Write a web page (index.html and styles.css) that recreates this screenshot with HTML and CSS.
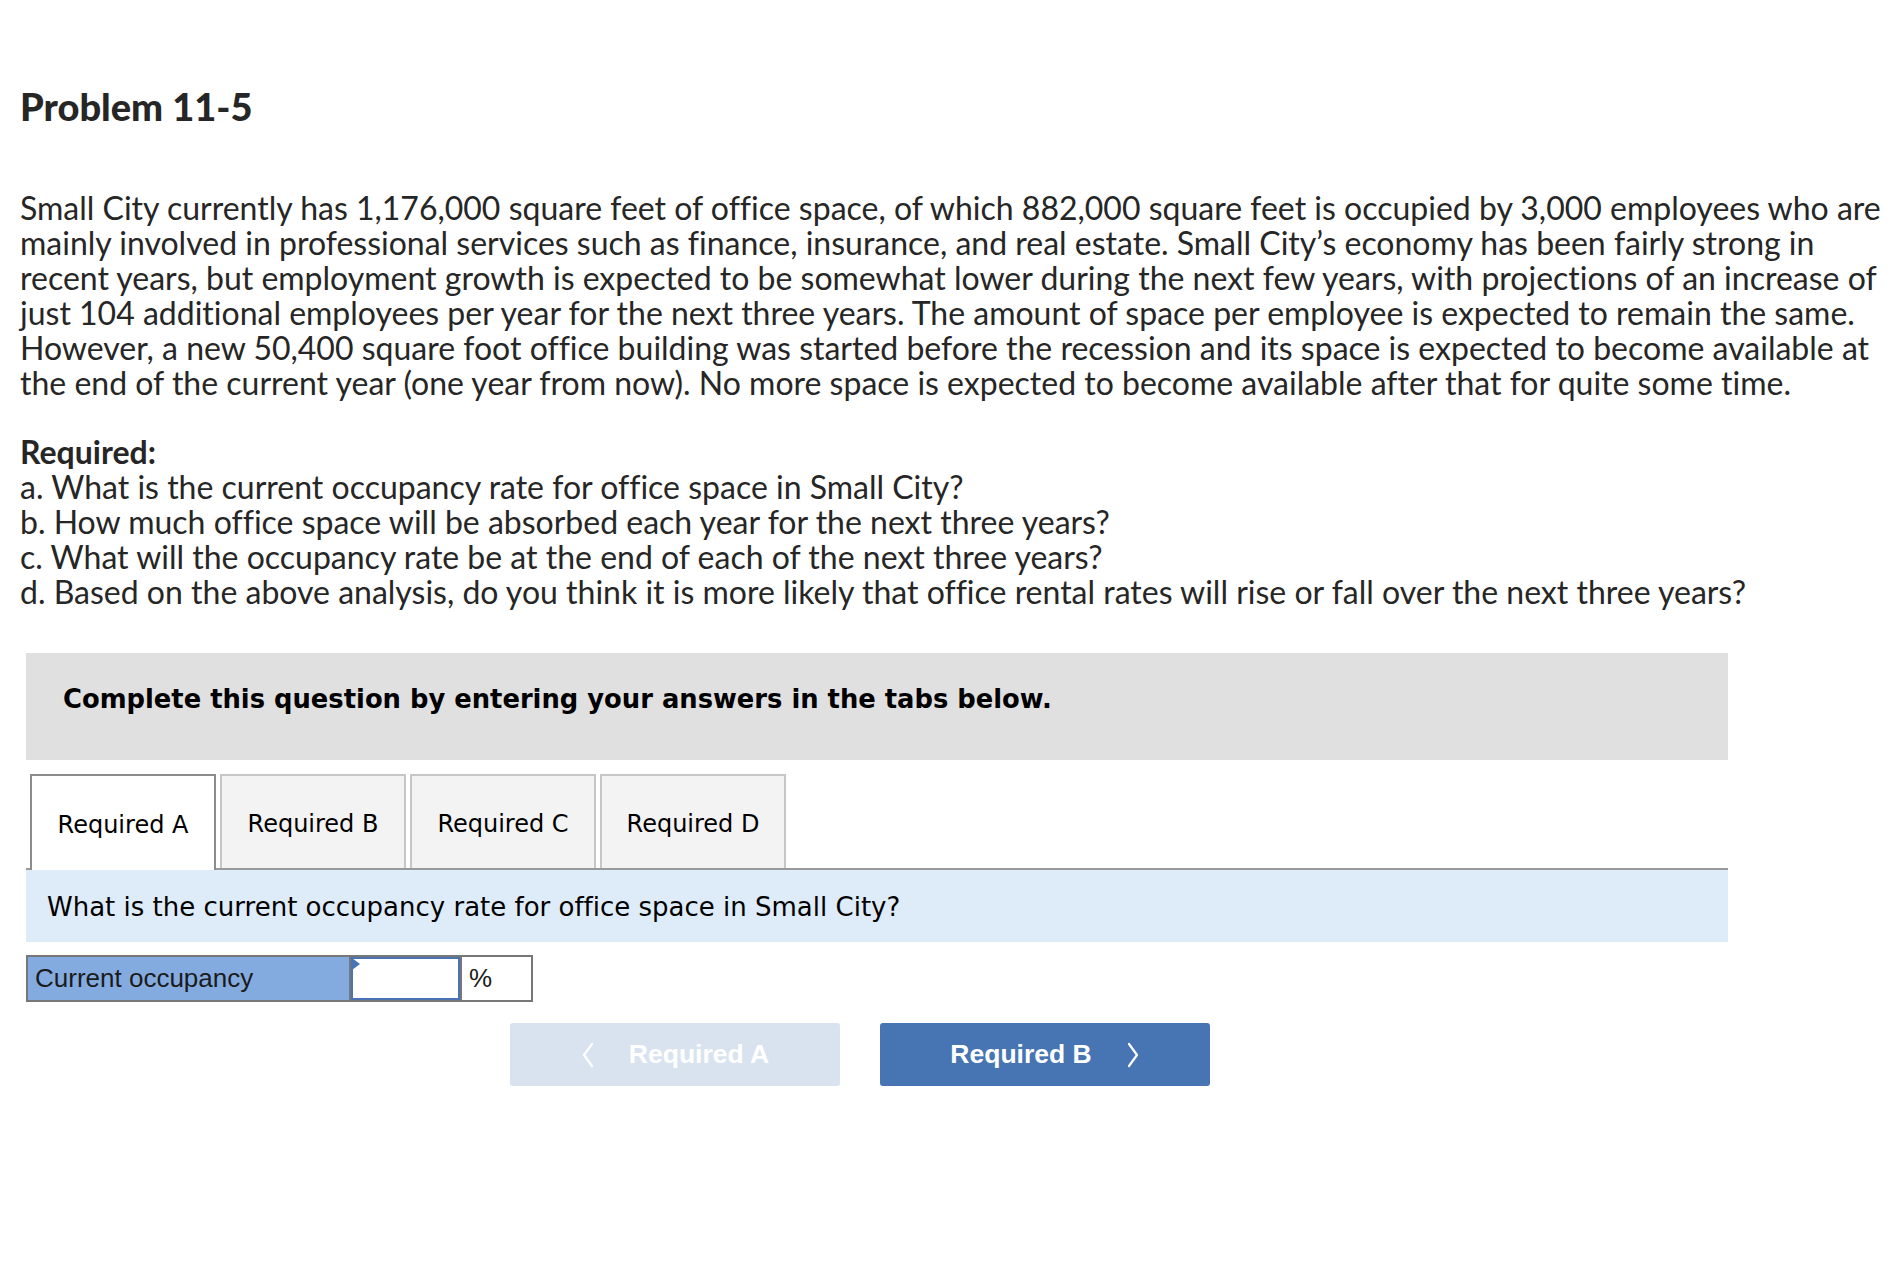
FILE: index.html
```html
<!DOCTYPE html>
<html lang="en">
<head>
<meta charset="utf-8">
<title>Problem 11-5</title>
<link rel="stylesheet" href="styles.css">
</head>
<body>
<div class="page">
  <h1 class="title">Problem 11-5</h1>
  <p class="para">Small City currently has 1,176,000 square feet of office space, of which 882,000 square feet is occupied by 3,000 employees who are<br>mainly involved in professional services such as finance, insurance, and real estate. Small City’s economy has been fairly strong in<br>recent years, but employment growth is expected to be somewhat lower during the next few years, with projections of an increase of<br>just 104 additional employees per year for the next three years. The amount of space per employee is expected to remain the same.<br>However, a new 50,400 square foot office building was started before the recession and its space is expected to become available at<br>the end of the current year (one year from now). No more space is expected to become available after that for quite some time.</p>
  <div class="required">
    <div class="req-head">Required:</div>
    <div>a. What is the current occupancy rate for office space in Small City?</div>
    <div>b. How much office space will be absorbed each year for the next three years?</div>
    <div>c. What will the occupancy rate be at the end of each of the next three years?</div>
    <div>d. Based on the above analysis, do you think it is more likely that office rental rates will rise or fall over the next three years?</div>
  </div>

  <div class="work">
    <div class="instructions">Complete this question by entering your answers in the tabs below.</div>
    <div class="tabs">
      <div class="tab active">Required A</div>
      <div class="tab">Required B</div>
      <div class="tab">Required C</div>
      <div class="tab">Required D</div>
    </div>
    <div class="prompt">What is the current occupancy rate for office space in Small City?</div>
    <div class="answer-row">
      <div class="label-cell">Current occupancy</div>
      <div class="input-cell"><div class="input-box"></div></div>
      <div class="unit-cell">%</div>
    </div>
    <div class="nav">
      <div class="btn btn-prev">
        <svg class="chev" width="14" height="26" viewBox="0 0 14 26"><polyline points="11,2 3,13 11,24" fill="none" stroke="#ffffff" stroke-width="2.2" stroke-linecap="round" stroke-linejoin="round"/></svg>
        <span>Required A</span>
      </div>
      <div class="btn btn-next">
        <span>Required B</span>
        <svg class="chev" width="14" height="26" viewBox="0 0 14 26"><polyline points="3,2 11,13 3,24" fill="none" stroke="#ffffff" stroke-width="2.2" stroke-linecap="round" stroke-linejoin="round"/></svg>
      </div>
    </div>
  </div>
</div>
</body>
</html>
```

FILE: styles.css
```css
html, body {
  margin: 0;
  padding: 0;
  background: #ffffff;
}

.page {
  padding: 84px 0 0 0;
  font-family: "Lato", "Liberation Sans", sans-serif;
  font-variant-ligatures: none;
  color: #262626;
}

.title {
  margin: 0 0 0 20px;
  font-size: 38px;
  line-height: 44px;
  font-weight: 900;
}

.para {
  margin: 62px 0 0 20px;
  font-size: 32px;
  line-height: 35px;
  white-space: nowrap;
}

.required {
  margin: 34px 0 0 20px;
  font-size: 32px;
  line-height: 35px;
  white-space: nowrap;
}

.req-head {
  font-weight: 700;
}

.work {
  margin: 44px 0 0 26px;
  width: 1702px;
  font-family: "DejaVu Sans", Verdana, sans-serif;
  color: #000;
}

.instructions {
  background: #e0e0e0;
  height: 107px;
  box-sizing: border-box;
  padding: 31px 0 0 37px;
  font-size: 25.8px;
  line-height: 30px;
  font-weight: 700;
}

.tabs {
  margin-top: 14px;
  display: flex;
  gap: 4px;
  padding-left: 4px;
  border-bottom: 2px solid #999999;
  height: 94px;
}

.tab {
  width: 186px;
  box-sizing: border-box;
  height: 94px;
  background: #f3f3f3;
  border: 2px solid #c6c6c6;
  border-bottom: none;
  display: flex;
  align-items: center;
  justify-content: center;
  font-size: 24px;
  padding-top: 4px;
}

.tab.active {
  background: #ffffff;
  border-color: #8c8c8c;
  height: 96px;
  margin-bottom: -2px;
}

.prompt {
  background: #deebf8;
  height: 72px;
  box-sizing: border-box;
  padding-left: 21px;
  padding-top: 2px;
  display: flex;
  align-items: center;
  font-size: 26px;
}

.answer-row {
  margin-top: 13px;
  display: flex;
  width: max-content;
  border: 2px solid #777777;
  height: 47px;
  box-sizing: border-box;
  font-family: "Liberation Sans", Arial, sans-serif;
  font-size: 26px;
  color: #1b1b1b;
}

.label-cell {
  width: 323px;
  box-sizing: border-box;
  background: #84abe0;
  border-right: 2px solid #777777;
  padding-left: 7px;
  display: flex;
  align-items: center;
}

.input-cell {
  width: 111px;
  box-sizing: border-box;
  border-right: 2px solid #777777;
  background: #ffffff;
}

.input-box {
  position: relative;
  height: 100%;
  box-sizing: border-box;
  border: 2px solid #4a73b5;
}

.input-box::before {
  content: "";
  position: absolute;
  left: -1px;
  top: -1px;
  border-top: 6px solid transparent;
  border-bottom: 6px solid transparent;
  border-left: 8px solid #4a73b5;
}

.unit-cell {
  width: 69px;
  box-sizing: border-box;
  padding-left: 7px;
  display: flex;
  align-items: center;
  background: #ffffff;
}

.nav {
  margin: 21px 0 0 484px;
  display: flex;
  gap: 40px;
}

.btn {
  width: 330px;
  height: 63px;
  border-radius: 3px;
  display: flex;
  align-items: center;
  justify-content: center;
  gap: 34px;
  font-family: "Liberation Sans", Arial, sans-serif;
  font-weight: 700;
  font-size: 26.5px;
  color: #ffffff;
}

.btn-prev {
  background: #d9e3f0;
}

.btn-next {
  background: #4774b3;
}

.chev {
  display: block;
}
```
